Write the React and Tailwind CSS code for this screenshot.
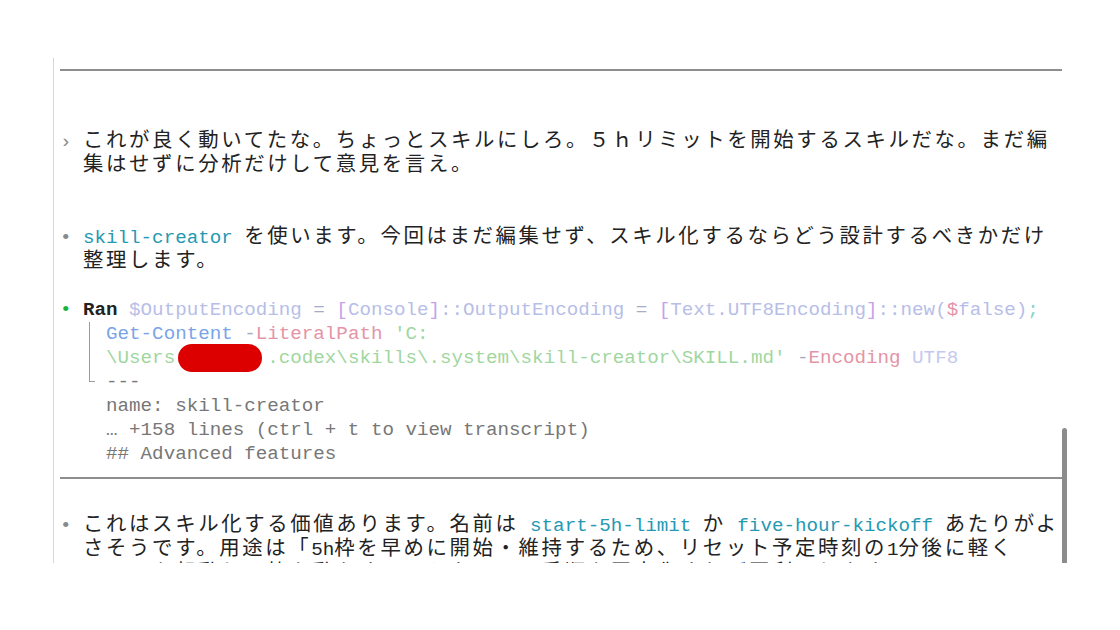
const CELL = 'w-[23.04px]'

function Row({ children }) {
  return <div className="h-[24px] leading-[24px] whitespace-pre">{children}</div>
}

function Rule() {
  return (
    <div className="h-[24px] flex items-center">
      <div className="h-[2px] w-[1003px] bg-[#8e8e8e]" />
    </div>
  )
}

// CJK glyphs take two terminal cells
function J({ children }) {
  return <span className="text-[20.4px] tracking-[2.64px]">{children}</span>
}

function Code({ children }) {
  return <span className="text-[#2599b3]">{children}</span>
}

function TreeRow({ last, children }) {
  return (
    <div className="flex h-[24px]">
      <div className={`${CELL} shrink-0`} />
      <div className={`${CELL} shrink-0 flex`}>
        {last ? (
          <div className="ml-[5.5px] w-[6px] h-[12px] border-l-[1.5px] border-b-[1.5px] border-[#9b9b9b]" />
        ) : (
          <div className="ml-[5.5px] h-full border-l-[1.5px] border-[#9b9b9b]" />
        )}
      </div>
      <span className="whitespace-pre leading-[24px]">{children}</span>
    </div>
  )
}

export default function App() {
  const lav = 'text-[#b7bee8]'
  const pur = 'text-[#c6a2ea]'
  const pink = 'text-[#e494a6]'
  const op = 'text-[#a7abc4]'
  const grn = 'text-[#9fd79f]'

  return (
    <div className="min-h-screen bg-white pt-[58px] pl-[53px] font-['Liberation_Mono','Noto_Sans_CJK_JP',monospace] text-[19.2px] text-[#222]">
      <div className="flex h-[505px] w-[1015px] border-l border-[#d6d6d6] overflow-hidden">
        <div className="w-[1008px] shrink-0 pl-[6px]">
          <Rule />
          <Row> </Row>
          <Row> </Row>
          <Row>
            <span className="text-[#8a8a8a]">›</span>{' '}
            <J>これが良く動いてたな。ちょっとスキルにしろ。５ｈリミットを開始するスキルだな。まだ編</J>
          </Row>
          <Row>
            {'  '}
            <J>集はせずに分析だけして意見を言え。</J>
          </Row>
          <Row> </Row>
          <Row> </Row>
          <Row>
            <span className="text-[#8a8a8a]">•</span> <Code>skill-creator</Code>{' '}
            <J>を使います。今回はまだ編集せず、スキル化するならどう設計するべきかだけ</J>
          </Row>
          <Row>
            {'  '}
            <J>整理します。</J>
          </Row>
          <Row> </Row>
          <Row>
            <span className="text-[#1db33a]">•</span> <span className="font-bold">Ran</span>{' '}
            <span className={lav}>$OutputEncoding</span>
            <span className={op}> = </span>
            <span className={pur}>[</span>
            <span className={lav}>Console</span>
            <span className={pur}>]</span>
            <span className={lav}>::OutputEncoding</span>
            <span className={op}> = </span>
            <span className={pur}>[</span>
            <span className={lav}>Text.UTF8Encoding</span>
            <span className={pur}>]</span>
            <span className={lav}>::new(</span>
            <span className={pink}>$</span>
            <span className={lav}>false)</span>
            <span className="text-[#86d4c4]">;</span>
          </Row>
          <TreeRow>
            <span className="text-[#7aa4e8]">Get-Content</span>
            <span className={op}> -</span>
            <span className={pink}>LiteralPath</span>
            <span className={grn}> 'C:</span>
          </TreeRow>
          <TreeRow>
            <span className={grn}>\Users</span>
            <span className="relative">
              <span className="text-white">\xxxxxx\</span>
              <span className="absolute left-[3px] top-[-3px] w-[84px] h-[28px] rounded-full bg-[#dc0000]" />
            </span>
            <span className={grn}>.codex\skills\.system\skill-creator\SKILL.md'</span>
            <span className={op}> -</span>
            <span className={pink}>Encoding</span>
            <span className="text-[#c3c9ee]"> UTF8</span>
          </TreeRow>
          <TreeRow last>
            <span className="text-[#777]">---</span>
          </TreeRow>
          <Row>
            <span className="text-[#777]">    name: skill-creator</span>
          </Row>
          <Row>
            <span className="text-[#777]">    … +158 lines (ctrl + t to view transcript)</span>
          </Row>
          <Row>
            <span className="text-[#777]">    ## Advanced features</span>
          </Row>
          <Rule />
          <Row> </Row>
          <Row>
            <span className="text-[#8a8a8a]">•</span>{' '}
            <J>これはスキル化する価値あります。名前は</J> <Code>start-5h-limit</Code> <J>か</J>{' '}
            <Code>five-hour-kickoff</Code> <J>あたりがよ</J>
          </Row>
          <Row>
            {'  '}
            <J>さそうです。用途は「</J>5h<J>枠を早めに開始・維持するため、リセット予定時刻の</J>1
            <J>分後に軽く</J>
          </Row>
          <Row>
            {'  '}Codex <J>を起動して枠を動かす」ことなので、手順を固定化すれば再利用しやすい</J>
          </Row>
        </div>
        <div className="w-[5px] shrink-0 flex flex-col">
          <div className="h-[370px]" />
          <div className="flex-1 bg-[#8c8c8c] rounded-t-full" />
        </div>
      </div>
    </div>
  )
}
